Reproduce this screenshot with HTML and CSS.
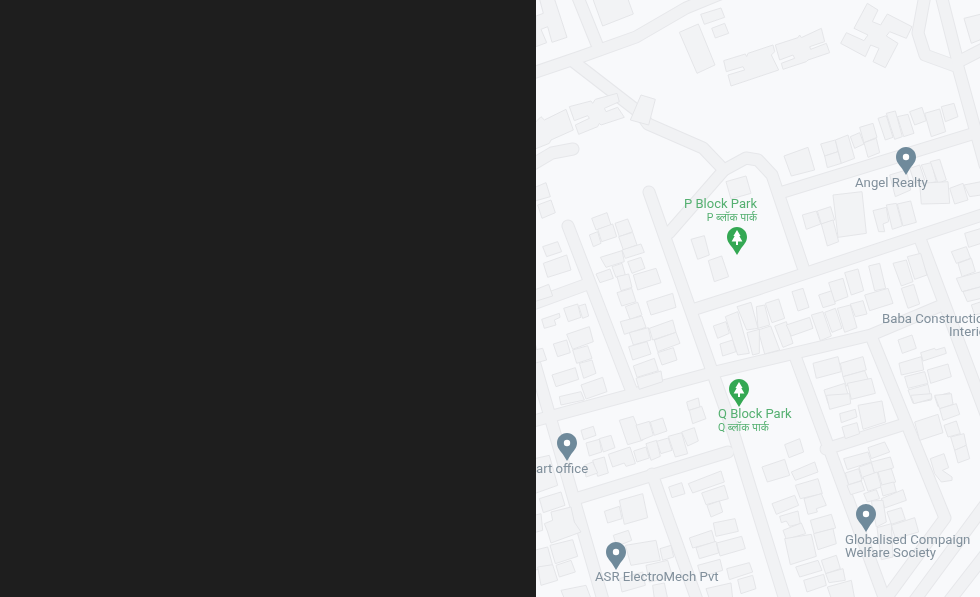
FILE: index.html
```html
<!DOCTYPE html>
<html lang="en">
<head>
<meta charset="utf-8">
<title>Map</title>
<link rel="stylesheet" href="styles.css">
</head>
<body>
<div class="app">
  <aside class="panel"></aside>
  <main class="map">
    <svg class="base" viewBox="536 0 444 597" width="444" height="597" aria-hidden="true">
      <defs>
        <g id="roads">
          <path d="M530 74L580 57L636 37L686 8L720-6"/>
          <path d="M577-5L598 47"/>
          <path d="M574 62L640 113L648 124L703 148L724 170L669 233"/>
          <path d="M724 170L746 158L758 160L772 175L803 267"/>
          <path d="M783 192L985 130"/>
          <path d="M925-5L918 33L925 55L958 67L985 165"/>
          <path d="M941-5L958 62L985 48"/>
          <path d="M692 310L758 289L985 214"/>
          <path d="M649 192L731 425L785 600"/>
          <path d="M568 226L632 392"/>
          <path d="M525 330L603 600"/>
          <path d="M530 422L715 372L871 335L940 306"/>
          <path d="M575 499L728 452"/>
          <path d="M826 449L905 424"/>
          <path d="M795 356L885 600"/>
          <path d="M919 236L990 425"/>
          <path d="M871 336L945 518L885 600"/>
          <path d="M915 600L985 505"/>
          <path d="M950 600L985 555"/>
          <path d="M652 474L697 600"/>
          <path d="M530 305L585 285"/>
          <path d="M530 166L552 153L573 149"/>
        </g>
      </defs>
      <use href="#roads" class="road-edge"/>
      <use href="#roads" class="road-fill"/>

      <g class="blds" transform="translate(536 0) scale(.33333)">
        <polygon points="55,-5 93,112 48,127 35,80 15,88 32,128 0,140 0,48 22,40 10,-5"/>
        <polygon points="170,-5 275,-5 292,42 200,78"/>
        <polygon points="430,97 487,72 537,195 483,220"/>
        <polygon points="494,43 555,24 566,52 505,73"/>
        <polygon points="527,85 566,70 578,100 538,114"/>
        <polygon points="100,320 165,303 170,310 178,298 243,280 250,305 205,325 210,335 245,322 265,352 195,375 190,370 185,380 128,403 118,375 160,355 155,347 115,362"/>
        <polygon points="-10,375 15,350 25,360 90,328 112,390 45,420 40,430 -10,450"/>
        <polygon points="315,285 358,298 338,375 283,360"/>
        <polygon points="570,545 630,528 645,580 585,597"/>
        <polygon points="-10,565 30,548 43,590 -10,605"/>
      </g>
      <g class="blds" transform="translate(758 0) scale(.33333)">
        <polygon points="-103,182 -38,162 -34,170 -30,160 45,135 50,155 40,165 62,210 -81,258 -90,225 -40,210 -45,200 -95,215"/>
        <polygon points="52,135 120,113 125,105 130,113 190,85 200,125 155,140 158,148 205,130 215,158 150,180 145,185 75,208 70,190 110,175 105,165 65,180"/>
        <polygon points="328,10 360,30 343,65 368,75 388,42 462,80 445,115 395,95 385,108 420,130 382,203 345,185 363,145 338,135 322,170 248,130 265,98 318,122 330,105 288,85"/>
        <polygon points="618,55 670,42 670,118 640,130"/>
        <polygon points="78,468 150,442 170,510 100,528"/>
        <polygon points="188,432 232,420 240,455 200,468"/>
        <polygon points="200,468 240,455 250,490 208,503"/>
        <polygon points="232,420 270,405 290,475 250,490"/>
        <polygon points="277,410 305,398 318,432 290,445"/>
        <polygon points="305,382 345,370 357,412 318,428"/>
        <polygon points="318,428 355,415 365,458 330,472"/>
        <polygon points="360,355 385,347 405,412 382,420"/>
        <polygon points="385,340 412,333 433,410 410,418"/>
        <polygon points="418,350 450,343 468,400 437,410"/>
        <polygon points="455,335 492,322 505,362 470,375"/>
        <polygon points="500,340 545,327 563,395 520,410"/>
        <polygon points="550,320 588,310 600,350 562,365"/>
        <polygon points="395,525 445,510 458,570 412,590"/>
        <polygon points="455,505 485,495 500,540 470,550"/>
        <polygon points="490,495 520,488 535,545 510,550"/>
        <polygon points="517,485 545,478 565,540 540,550"/>
        <polygon points="485,550 570,545 575,610 490,612"/>
        <polygon points="575,565 615,550 630,600 590,612"/>
        <polygon points="618,555 670,545 670,585 635,590"/>
      </g>
      <g class="blds" transform="translate(758 200) scale(.33333)">
        <polygon points="225,-15 312,-25 325,100 240,112"/>
        <polygon points="133,45 175,33 188,72 145,88"/>
        <polygon points="178,33 218,20 230,60 190,72"/>
        <polygon points="190,72 225,60 242,125 208,138"/>
        <polygon points="345,32 385,22 392,65 375,72 380,95 362,95"/>
        <polygon points="385,15 415,10 433,78 403,88"/>
        <polygon points="418,12 458,3 475,67 435,78"/>
        <polygon points="620,100 670,85 670,130 632,142"/>
        <polygon points="580,155 625,140 638,175 595,190"/>
        <polygon points="600,190 640,175 652,215 612,230"/>
        <polygon points="595,235 670,215 670,260 612,275"/>
        <polygon points="615,275 670,260 670,295 628,305"/>
        <polygon points="640,315 670,305 670,340 650,345"/>
        <polygon points="-5,320 20,315 35,375 0,385"/>
        <polygon points="22,310 62,297 80,355 42,368"/>
        <polygon points="0,390 38,378 65,450 20,462"/>
        <polygon points="50,378 85,365 105,430 75,442"/>
        <polygon points="102,275 135,265 153,322 120,333"/>
        <polygon points="182,285 222,272 232,312 195,323"/>
        <polygon points="212,248 255,235 270,290 230,305"/>
        <polygon points="260,218 300,207 317,272 280,285"/>
        <polygon points="332,198 365,190 383,265 350,272"/>
        <polygon points="320,285 390,265 405,310 335,332"/>
        <polygon points="405,190 445,180 465,245 430,258"/>
        <polygon points="448,170 488,160 507,225 470,238"/>
        <polygon points="430,265 467,253 485,312 450,325"/>
        <polygon points="85,375 155,352 165,385 100,408"/>
        <polygon points="160,345 195,335 220,408 187,422"/>
        <polygon points="200,337 232,325 252,385 222,397"/>
        <polygon points="238,325 277,315 297,383 260,397"/>
        <polygon points="277,312 315,302 327,342 292,350"/>
        <polygon points="165,490 240,470 250,515 175,535"/>
        <polygon points="247,490 315,470 325,510 255,530"/>
        <polygon points="255,530 320,512 330,537 265,558"/>
        <polygon points="268,550 340,535 352,580 280,598"/>
        <polygon points="198,570 260,550 275,600 210,610"/>
        <polygon points="420,420 462,405 475,445 433,460"/>
        <polygon points="488,458 530,445 533,450 560,442 565,460 495,483"/>
        <polygon points="423,490 490,470 497,510 430,525"/>
        <polygon points="440,530 500,515 510,550 450,565"/>
        <polygon points="508,510 570,492 580,530 518,550"/>
        <polygon points="450,570 510,553 520,600 465,610"/>
        <polygon points="530,590 575,578 585,610 540,620"/>
      </g>
      <g class="blds" transform="translate(536 200) scale(.33333)">
        <polygon points="5,15 45,0 58,38 18,55"/>
        <polygon points="20,140 65,125 77,155 32,170"/>
        <polygon points="22,190 92,165 105,210 35,232"/>
        <polygon points="-5,270 38,253 50,288 -5,305"/>
        <polygon points="167,55 213,38 225,75 180,90"/>
        <polygon points="185,88 230,72 242,110 197,125"/>
        <polygon points="160,105 185,95 195,130 172,140"/>
        <polygon points="237,70 275,57 290,95 250,110"/>
        <polygon points="248,110 290,97 303,135 262,150"/>
        <polygon points="193,172 258,152 265,185 210,202"/>
        <polygon points="258,150 315,132 325,157 268,175"/>
        <polygon points="275,185 315,172 327,205 288,220"/>
        <polygon points="180,222 222,207 232,235 192,248"/>
        <polygon points="228,200 258,190 268,225 240,232"/>
        <polygon points="243,230 278,222 288,262 255,272"/>
        <polygon points="243,278 287,265 300,305 257,318"/>
        <polygon points="292,225 360,205 375,248 305,270"/>
        <polygon points="332,305 410,280 420,322 345,345"/>
        <polygon points="268,320 305,307 318,345 282,358"/>
        <polygon points="253,365 318,348 330,382 265,403"/>
        <polygon points="280,398 337,383 345,420 292,435"/>
        <polygon points="340,385 410,360 420,397 350,420"/>
        <polygon points="355,420 420,397 432,430 365,455"/>
        <polygon points="278,440 333,425 345,462 290,480"/>
        <polygon points="365,458 412,443 423,480 378,495"/>
        <polygon points="292,498 355,475 367,512 303,532"/>
        <polygon points="300,535 375,513 380,545 310,568"/>
        <polygon points="465,118 505,107 520,165 485,178"/>
        <polygon points="517,182 557,168 578,230 535,245"/>
        <polygon points="532,378 570,365 580,400 545,415"/>
        <polygon points="552,432 590,420 600,455 560,468"/>
        <polygon points="568,350 605,335 640,460 605,465"/>
        <polygon points="603,320 645,307 666,385 632,390"/>
        <polygon points="633,398 670,388 670,460 650,465"/>
        <polygon points="17,358 70,340 72,352 55,360 60,375 25,385"/>
        <polygon points="83,325 125,312 135,352 97,365"/>
        <polygon points="128,318 148,312 158,348 140,355"/>
        <polygon points="92,403 160,380 172,425 110,448"/>
        <polygon points="110,450 155,437 168,475 122,490"/>
        <polygon points="52,432 92,420 103,458 65,470"/>
        <polygon points="130,490 168,480 180,520 143,535"/>
        <polygon points="48,525 118,503 128,538 60,560"/>
        <polygon points="135,555 200,532 213,575 150,597"/>
        <polygon points="70,590 135,575 145,600 75,615"/>
        <polygon points="-5,450 20,445 32,480 -5,490"/>
      </g>
      <g class="blds" transform="translate(536 397) scale(.33333)">
        <polygon points="135,100 172,88 180,115 143,128"/>
        <polygon points="150,138 190,127 197,165 160,177"/>
        <polygon points="190,125 225,115 237,152 202,165"/>
        <polygon points="250,70 292,58 320,130 275,143"/>
        <polygon points="300,85 340,73 352,115 315,130"/>
        <polygon points="343,75 380,63 393,102 355,115"/>
        <polygon points="217,172 282,150 297,195 298,200 270,208 265,198 230,210"/>
        <polygon points="293,162 330,150 340,183 303,195"/>
        <polygon points="330,140 362,130 373,178 345,190"/>
        <polygon points="362,133 397,123 408,160 375,170"/>
        <polygon points="397,118 437,107 455,170 418,180"/>
        <polygon points="437,105 475,92 487,132 455,147"/>
        <polygon points="452,15 487,3 492,30 458,40"/>
        <polygon points="460,40 497,28 510,65 470,80"/>
        <polygon points="170,190 205,180 217,228 185,238"/>
        <polygon points="145,205 170,195 185,228 150,240"/>
        <polygon points="-5,185 40,175 65,265 -5,290"/>
        <polygon points="10,305 75,285 87,325 22,347"/>
        <polygon points="45,345 105,330 115,375 135,405 45,438 35,405 25,380 50,370"/>
        <polygon points="-5,355 15,350 20,400 -5,407"/>
        <polygon points="-5,460 35,450 50,505 -5,520"/>
        <polygon points="42,445 110,428 125,478 58,500"/>
        <polygon points="5,510 50,503 65,550 15,565"/>
        <polygon points="60,505 105,490 118,525 70,540"/>
        <polygon points="75,580 150,565 165,605 85,605"/>
        <polygon points="205,343 250,328 258,365 215,378"/>
        <polygon points="250,310 320,290 335,362 265,382"/>
        <polygon points="232,415 277,400 287,430 242,448"/>
        <polygon points="268,445 360,430 373,490 285,505"/>
        <polygon points="372,455 405,445 413,480 380,490"/>
        <polygon points="330,505 395,490 410,540 340,555"/>
        <polygon points="250,545 320,525 328,565 258,585"/>
        <polygon points="350,565 385,558 395,605 355,605"/>
        <polygon points="398,270 437,257 447,290 408,302"/>
        <polygon points="457,260 555,222 565,255 470,288"/>
        <polygon points="497,288 565,265 577,305 510,323"/>
        <polygon points="513,325 550,312 560,345 525,360"/>
        <polygon points="532,378 597,365 607,403 540,418"/>
        <polygon points="460,423 527,400 537,435 470,453"/>
        <polygon points="480,452 540,433 548,468 490,485"/>
        <polygon points="542,438 617,418 628,455 552,477"/>
        <polygon points="485,505 552,487 560,520 495,540"/>
        <polygon points="510,575 585,558 590,605 520,605"/>
        <polygon points="572,515 640,497 650,525 580,548"/>
        <polygon points="605,548 650,535 660,575 615,590"/>
      </g>
      <g class="blds" transform="translate(758 397) scale(.33333)">
        <polygon points="205,-5 275,-10 278,20 215,37"/>
        <polygon points="245,50 292,37 297,60 250,77"/>
        <polygon points="252,90 297,77 305,110 262,125"/>
        <polygon points="300,25 372,12 383,75 315,97"/>
        <polygon points="458,-5 520,-10 522,5 468,20"/>
        <polygon points="530,-5 580,-10 585,22 545,35"/>
        <polygon points="545,35 595,20 605,52 555,70"/>
        <polygon points="558,85 595,72 607,110 570,120"/>
        <polygon points="470,75 540,52 555,107 485,130"/>
        <polygon points="578,120 618,110 625,145 590,160"/>
        <polygon points="590,160 625,145 635,185 600,198"/>
        <polygon points="517,185 558,170 572,212 553,220 582,240 582,250 550,255 530,230"/>
        <polygon points="80,143 125,125 137,165 93,182"/>
        <polygon points="12,210 80,187 95,235 28,255"/>
        <polygon points="100,225 170,195 180,225 112,250"/>
        <polygon points="112,265 180,245 193,290 127,305"/>
        <polygon points="42,320 110,295 122,325 55,352"/>
        <polygon points="138,305 190,290 205,325 175,335 178,345 150,352"/>
        <polygon points="65,358 120,342 127,380 95,388 85,372 70,377"/>
        <polygon points="75,400 130,378 143,410 85,427"/>
        <polygon points="80,425 160,412 175,478 97,503"/>
        <polygon points="157,370 220,352 233,393 168,410"/>
        <polygon points="167,410 225,395 235,440 180,458"/>
        <polygon points="113,510 180,490 192,520 125,540"/>
        <polygon points="190,490 235,475 247,515 203,530"/>
        <polygon points="137,550 197,532 205,565 147,585"/>
        <polygon points="203,530 255,515 262,550 213,557"/>
        <polygon points="208,570 280,550 290,605 220,605"/>
        <polygon points="257,185 330,165 340,195 268,218"/>
        <polygon points="330,152 380,135 395,165 340,185"/>
        <polygon points="340,195 397,180 407,212 350,235"/>
        <polygon points="303,210 340,197 350,232 313,245"/>
        <polygon points="262,228 302,215 312,250 272,263"/>
        <polygon points="267,265 310,252 320,280 278,293"/>
        <polygon points="315,240 358,225 370,270 330,283"/>
        <polygon points="360,225 400,215 413,255 373,268"/>
        <polygon points="367,265 407,255 415,285 375,297"/>
        <polygon points="317,290 355,278 365,305 328,315"/>
        <polygon points="370,305 435,278 445,310 380,333"/>
        <polygon points="340,312 375,310 385,375 355,390"/>
        <polygon points="387,345 430,332 442,368 400,382"/>
        <polygon points="400,385 470,362 482,405 412,425"/>
        <polygon points="357,392 400,380 405,480 370,488"/>
      </g>
    </svg>

    <svg class="pin pin-angel" viewBox="0 0 20 28"><path class="pin-grey" d="M10 0C4.500 0 0 4.400 0 10C0 15 3.600 18 6 21.500L10 28L14 21.500C16.400 18 20 15 20 10C20 4.400 15.500 0 10 0Z"/><circle class="pin-hole" cx="10" cy="10" r="3.200"/></svg>
    <svg class="pin pin-smart" viewBox="0 0 20 28"><path class="pin-grey" d="M10 0C4.500 0 0 4.400 0 10C0 15 3.600 18 6 21.500L10 28L14 21.500C16.400 18 20 15 20 10C20 4.400 15.500 0 10 0Z"/><circle class="pin-hole" cx="10" cy="10" r="3.200"/></svg>
    <svg class="pin pin-asr" viewBox="0 0 20 28"><path class="pin-grey" d="M10 0C4.500 0 0 4.400 0 10C0 15 3.600 18 6 21.500L10 28L14 21.500C16.400 18 20 15 20 10C20 4.400 15.500 0 10 0Z"/><circle class="pin-hole" cx="10" cy="10" r="3.200"/></svg>
    <svg class="pin pin-global" viewBox="0 0 20 28"><path class="pin-grey" d="M10 0C4.500 0 0 4.400 0 10C0 15 3.600 18 6 21.500L10 28L14 21.500C16.400 18 20 15 20 10C20 4.400 15.500 0 10 0Z"/><circle class="pin-hole" cx="10" cy="10" r="3.200"/></svg>
    <svg class="pin pin-pblock" viewBox="0 0 20 28"><path class="pin-green" d="M10 0C4.500 0 0 4.400 0 10C0 15 3.600 18 6 21.500L10 28L14 21.500C16.400 18 20 15 20 10C20 4.400 15.500 0 10 0Z"/><path class="pin-hole" d="M10 3L13.600 9H12.300L15.400 14.500H11V18H9V14.500H4.600L7.700 9H6.400Z"/></svg>
    <svg class="pin pin-qblock" viewBox="0 0 20 28"><path class="pin-green" d="M10 0C4.500 0 0 4.400 0 10C0 15 3.600 18 6 21.500L10 28L14 21.500C16.400 18 20 15 20 10C20 4.400 15.500 0 10 0Z"/><path class="pin-hole" d="M10 3L13.600 9H12.300L15.400 14.500H11V18H9V14.500H4.600L7.700 9H6.400Z"/></svg>

    <div class="label lb-angel">Angel Realty</div>
    <div class="label green lb-pblock">P Block Park<small>P ब्लॉक पार्क</small></div>
    <div class="label green lb-qblock">Q Block Park<small>Q ब्लॉक पार्क</small></div>
    <div class="label lb-baba">Baba Construction<br><span class="lb-indent">Interior</span></div>
    <div class="label lb-smart">art office</div>
    <div class="label lb-asr">ASR ElectroMech Pvt</div>
    <div class="label lb-global">Globalised Compaign<br>Welfare Society</div>
  </main>
</div>
</body>
</html>
```
FILE: styles.css
```css
* { box-sizing: border-box; }
html, body { margin: 0; height: 100%; overflow: hidden; }
body { font-family: Roboto, "Noto Sans", "Noto Sans Devanagari", sans-serif; }

.app { display: flex; width: 100%; height: 100vh; }
.panel { flex: 0 0 536px; background: #1e1e1e; }
.map { flex: 1; position: relative; overflow: hidden; background: #f8f9fb; }

.base { display: block; filter: blur(.3px); }
.road-edge { fill: none; stroke: #e6e7ea; stroke-width: 13px; stroke-linecap: round; stroke-linejoin: round; }
.road-fill { fill: none; stroke: #f1f2f4; stroke-width: 11px; stroke-linecap: round; stroke-linejoin: round; }
.blds polygon { fill: #f2f3f5; stroke: #e4e5e8; stroke-width: 3px; stroke-linejoin: round; }

.pin { position: absolute; width: 20px; height: 28px; filter: blur(.2px); }
.pin-grey { fill: #6f8a9b; }
.pin-green { fill: #34a853; }
.pin-hole { fill: #fff; }
.pin-angel { left: 360px; top: 147px; }
.pin-pblock { left: 191px; top: 227px; }
.pin-qblock { left: 193px; top: 379px; }
.pin-smart { left: 21px; top: 433px; }
.pin-asr { left: 70px; top: 542px; }
.pin-global { left: 320px; top: 504px; }

.label { position: absolute; font-size: 13.200px; line-height: 13px; color: #81909c; white-space: nowrap; filter: blur(.2px); }
.label.green { color: #55b071; font-size: 13px; line-height: 13.500px; }
.label small { display: block; font-size: 10.500px; line-height: 13px; }
.lb-angel { left: 319px; top: 176px; }
.lb-pblock { right: 223px; top: 197px; text-align: right; }
.lb-qblock { left: 182px; top: 407px; }
.lb-baba { left: 346px; top: 312px; }
.lb-indent { margin-left: 67px; }
.lb-smart { left: 0; top: 462px; }
.lb-asr { left: 59px; top: 570px; }
.lb-global { left: 309px; top: 533px; }
```
